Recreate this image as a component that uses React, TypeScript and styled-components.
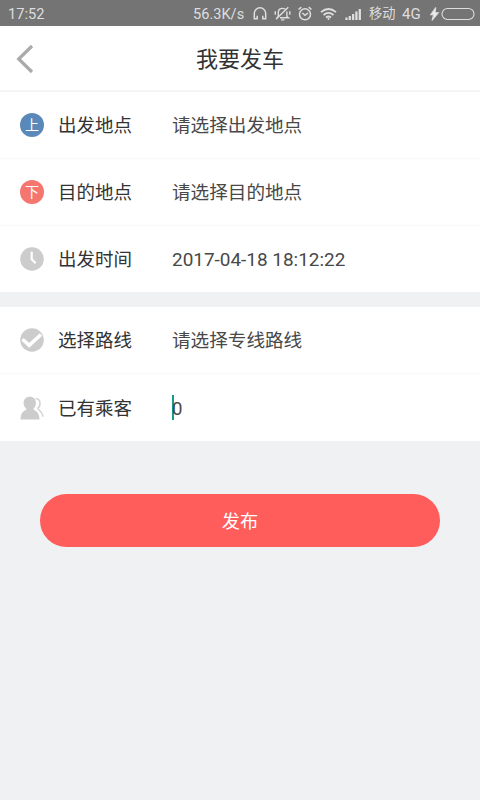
import React from 'react';
import styled, { createGlobalStyle } from 'styled-components';

const GlobalStyle = createGlobalStyle`
  * { box-sizing: border-box; }
  body { margin: 0; background: #f0f1f3; }
`;

const Screen = styled.main`
  width: 480px;
  height: 800px;
  overflow: hidden;
  display: flex;
  flex-direction: column;
  background: #f0f1f3;
  color: #333;
  font-family: Roboto, "Noto Sans CJK SC", sans-serif;
`;

const StatusBar = styled.div`
  height: 26px;
  flex: none;
  display: flex;
  align-items: center;
  padding: 2px 6px 0 8px;
  background: #747474;
  color: #dedede;
  line-height: 24px;
  white-space: nowrap;
`;

const StatusItem = styled.span<{ $width: number; $gap?: number; $size?: number }>`
  flex: none;
  width: ${p => p.$width}px;
  margin-left: ${p => p.$gap ?? 0}px;
  font-size: ${p => p.$size ?? 14.6}px;
`;

const StatusIcon = styled.svg<{ $gap: number; $stroke?: number }>`
  flex: none;
  display: block;
  margin-left: ${p => p.$gap}px;
  fill: none;
  stroke: #dedede;
  stroke-width: ${p => p.$stroke ?? 1.5};
`;

const Header = styled.header`
  height: 66px;
  flex: none;
  display: grid;
  grid-template-columns: 60px 1fr 60px;
  align-items: center;
  background: #fff;
  border-bottom: 2px solid #f5f5f5;
`;

const BackButton = styled.button`
  height: 64px;
  padding: 1px 0 0 16px;
  border: 0;
  background: none;
  text-align: left;
  svg { display: block; }
`;

const Title = styled.h1`
  margin: 0;
  padding-top: 3px;
  font-size: 22px;
  font-weight: 400;
  line-height: 32px;
  text-align: center;
`;

const Group = styled.section<{ $gap?: number }>`
  flex: none;
  margin-top: ${p => p.$gap ?? 0}px;
  background: #fff;
`;

const Row = styled.div<{ $height?: number }>`
  height: ${p => p.$height ?? 67}px;
  display: grid;
  grid-template-columns: 38px 114px 1fr;
  align-items: center;
  padding-left: 20px;
  border-bottom: 1px solid #f8f8f8;
  &:last-child { border-bottom: 0; }
`;

const RowIcon = styled.svg`
  display: block;
  width: 24px;
  height: 24px;
`;

const Badge = styled.span<{ $color: string }>`
  width: 24px;
  height: 24px;
  padding-top: 1px;
  border-radius: 50%;
  background: ${p => p.$color};
  color: #fff;
  font-size: 14px;
  line-height: 23px;
  text-align: center;
`;

const Label = styled.span`
  padding-top: 2px;
  font-size: 18.5px;
  line-height: 28px;
`;

const Value = styled.span<{ $size?: number }>`
  display: flex;
  align-items: center;
  padding-top: 2px;
  color: #484848;
  font-size: ${p => p.$size ?? 18.6}px;
  line-height: 28px;
`;

const Caret = styled.i`
  width: 2px;
  height: 25px;
  margin: -2px -2px 0 0;
  background: #159c8c;
`;

const Submit = styled.button`
  flex: none;
  height: 53px;
  margin: 53px 40px 0;
  padding: 2px 0 0;
  border: 0;
  border-radius: 27px;
  background: #ff5c5c;
  color: #fff;
  font: 400 18.2px/28px Roboto, "Noto Sans CJK SC", sans-serif;
`;

const Headphones = () => (
  <StatusIcon $gap={7} width="16" height="16" viewBox="0 0 16 16">
    <path d="M2.3 13V7.5a5.7 5.7 0 0 1 11.4 0V13M1.6 12.8h3.6V9.8M14.4 12.8h-3.6V9.8" />
  </StatusIcon>
);

const MutedBell = () => (
  <StatusIcon $gap={6} $stroke={1.4} width="17" height="16" viewBox="0 0 17 16">
    <path d="M4.3 10.5V6.2C4.3 3.7 6 2.4 8.5 2.4c1.5 0 2.6.5 3.3 1.4M12.9 5.5v5l1.6 1.3H6M4.3 10.5l-1.6 1.3M7 13.9h3.3M14.3 1.3 2 13.2M1.3 5.3v3.4M15.8 5.3v3.4" />
  </StatusIcon>
);

const AlarmClock = () => (
  <StatusIcon $gap={6} width="16" height="16" viewBox="0 0 16 16">
    <circle cx="8" cy="8.3" r="5.5" />
    <path d="m5.3 7 2.7 2.3L11 7M1.5 3.5 4.3 1.2M14.5 3.5l-2.8-2.3" />
  </StatusIcon>
);

const Wifi = () => (
  <StatusIcon $gap={7} $stroke={1.8} width="17" height="14" viewBox="0 0 17 14">
    <path d="M1 5.1q7.5-6.3 15 0M3.5 8q5-4.2 10 0M6 10.5q2.5-2 5 0" />
    <circle cx="8.5" cy="12" r="1" fill="#dedede" stroke="none" />
  </StatusIcon>
);

const Signal = () => (
  <StatusIcon $gap={8} $stroke={2.3} width="17" height="12" viewBox="0 0 17 12">
    <path d="M1.5 12V9.5M4.8 12V8M8.1 12V6M11.4 12V3.5M14.8 12V1" />
  </StatusIcon>
);

const Battery = () => (
  <StatusIcon $gap={7} $stroke={1.1} width="45" height="14" viewBox="0 0 45 14">
    <path d="M5.8.5.7 7.7h3L2 13.5l6.3-7.8H5L5.8.5z" fill="#eee" />
    <rect x="12" y="1.5" width="32" height="11" rx="5.5" />
  </StatusIcon>
);

const Clock = () => (
  <RowIcon viewBox="0 0 24 24">
    <circle cx="12" cy="12" r="11.8" fill="#ccc" />
    <path d="M11.7 4.8v7.5l4 4" fill="none" stroke="#fff" strokeWidth="2.2" />
  </RowIcon>
);

const Check = () => (
  <RowIcon viewBox="0 0 24 24">
    <circle cx="12" cy="12" r="11.8" fill="#ccc" />
    <path d="m2.5 11.3 6.7 6L21 6.5" fill="none" stroke="#fff" strokeWidth="3.5" />
  </RowIcon>
);

const Passengers = () => (
  <RowIcon viewBox="0 0 24 24">
    <path d="M15.5 2.4c5.8.3 5.4 7.4 2.3 9.9 0 2 4.7 2.5 5 8.5" fill="none" stroke="#d3d3d3" strokeWidth="1.5" />
    <path d="M9.7.8c4 0 6.2 2.7 6.2 6.1 0 2.8-1.2 4.7-2.5 5.8 0 2.2 6.1 1.5 6.1 10.7H.5c0-9.2 6-8.5 6-10.7C5 11.6 3.6 9.7 3.6 6.9 3.6 3.5 5.8.8 9.7.8z" fill="#ccc" />
  </RowIcon>
);

export default function App() {
  return (
    <Screen>
      <GlobalStyle />
      <StatusBar>
        <StatusItem $width={185}>17:52</StatusItem>
        <StatusItem $width={52}>56.3K/s</StatusItem>
        <Headphones />
        <MutedBell />
        <AlarmClock />
        <Wifi />
        <Signal />
        <StatusItem $width={27} $gap={7} $size={13.2}>移动</StatusItem>
        <StatusItem $width={21} $gap={6} $size={15}>4G</StatusItem>
        <Battery />
      </StatusBar>
      <Header>
        <BackButton aria-label="返回">
          <svg width="18" height="30" viewBox="0 0 18 30">
            <path d="M16 2 2.7 15 16 28" fill="none" stroke="#aaa" strokeWidth="3.2" />
          </svg>
        </BackButton>
        <Title>我要发车</Title>
      </Header>
      <Group>
        <Row>
          <Badge $color="#5a88b8">上</Badge>
          <Label>出发地点</Label>
          <Value>请选择出发地点</Value>
        </Row>
        <Row>
          <Badge $color="#f4766e">下</Badge>
          <Label>目的地点</Label>
          <Value>请选择目的地点</Value>
        </Row>
        <Row $height={66}>
          <Clock />
          <Label>出发时间</Label>
          <Value $size={18.95}>2017-04-18 18:12:22</Value>
        </Row>
      </Group>
      <Group $gap={15}>
        <Row>
          <Check />
          <Label>选择路线</Label>
          <Value>请选择专线路线</Value>
        </Row>
        <Row>
          <Passengers />
          <Label>已有乘客</Label>
          <Value><Caret />0</Value>
        </Row>
      </Group>
      <Submit>发布</Submit>
    </Screen>
  );
}
